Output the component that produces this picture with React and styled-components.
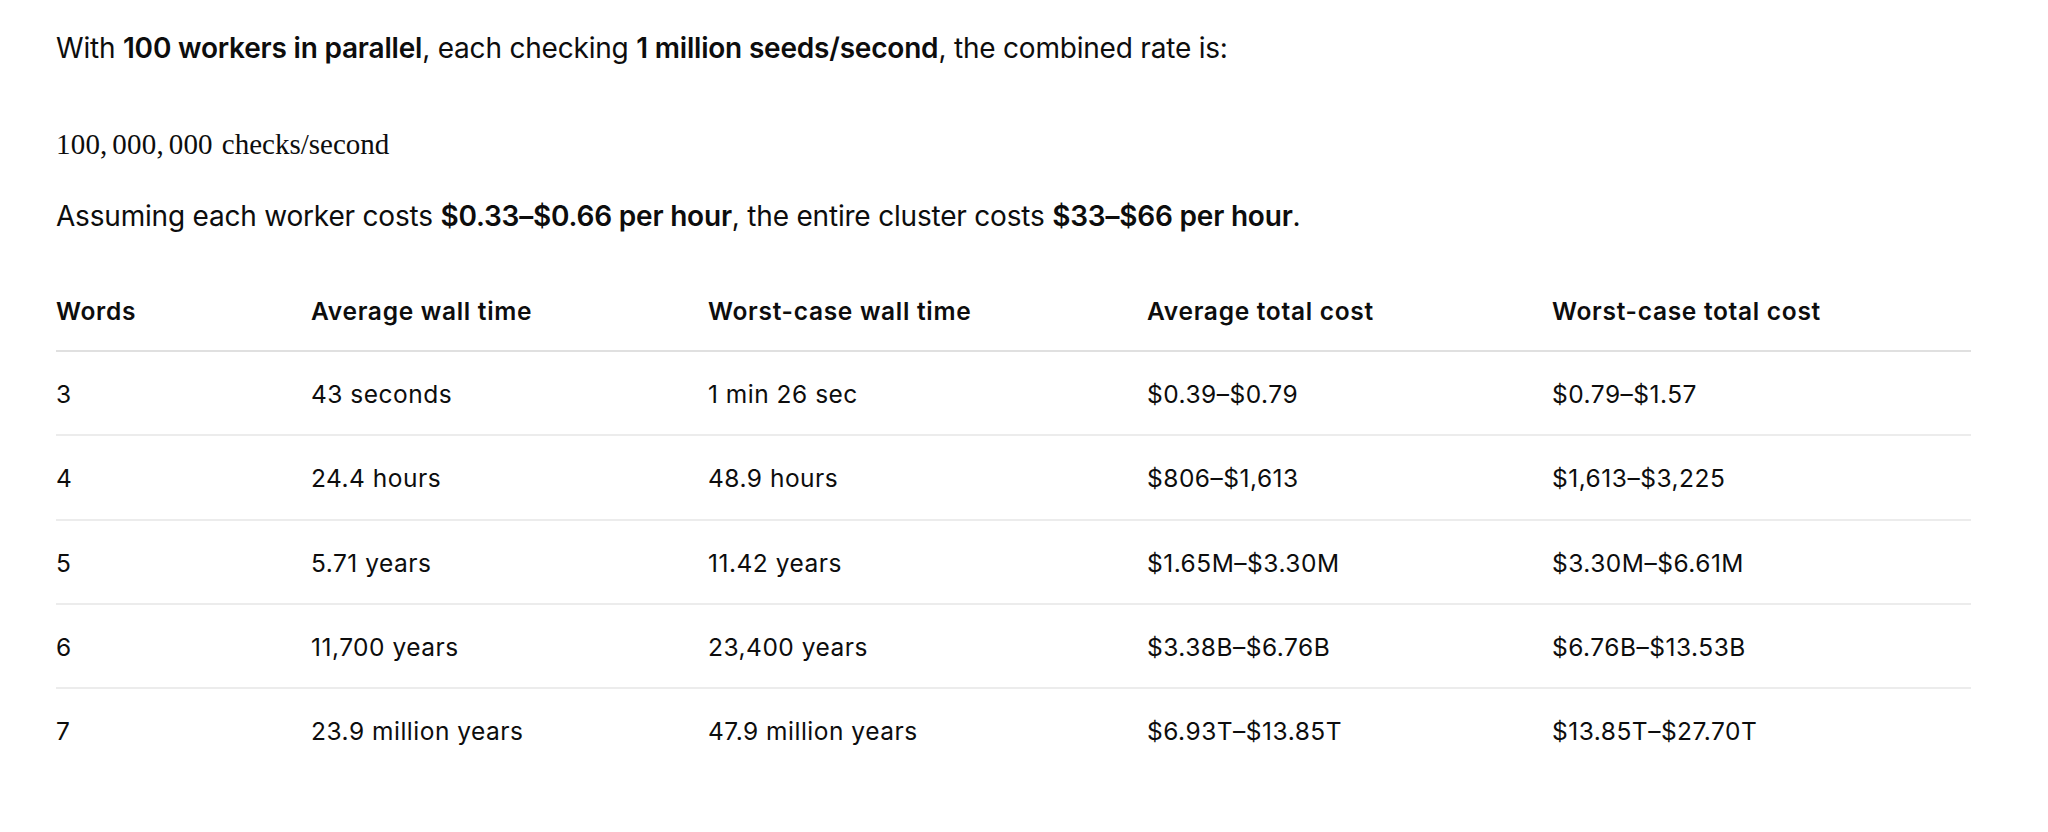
import React from "react";
import styled, { createGlobalStyle } from "styled-components";

const GlobalStyle = createGlobalStyle`
  html, body { margin: 0; padding: 0; background: #ffffff; }
  body {
    font-family: Inter, "Noto Sans", "Liberation Sans", sans-serif;
    color: #0d0d0d;
    -webkit-font-smoothing: antialiased;
  }
`;

const Page = styled.main`
  padding: 24px 77px 0 56px;
`;

const Paragraph = styled.p`
  margin: ${(p) => p.$mt || 0}px 0 0;
  font-size: 28px;
  line-height: 48px;
  font-weight: 400;
  letter-spacing: -0.2px;
`;

const Strong = styled.strong`
  font-weight: 600;
`;

const MathBlock = styled.div`
  margin-top: 52px;
  font-family: "Liberation Serif", "DejaVu Serif", serif;
  font-size: 29px;
  line-height: 40px;
  color: #0d0d0d;
`;

const MathNum = styled.span`
  letter-spacing: 0.2px;
`;

const MathComma = styled.span`
  margin-right: 5px;
`;

const MathText = styled.span`
  margin-left: 9px;
`;

const Table = styled.table`
  margin-top: 28px;
  width: 1915px;
  border-collapse: collapse;
  table-layout: fixed;
  font-size: 24.5px;
  line-height: 32px;
`;

const Col = styled.col`
  width: ${(p) => p.$w}px;
`;

const HeadCell = styled.th`
  text-align: left;
  font-weight: 600;
  letter-spacing: 0.7px;
  padding: 27px 0 23px;
  border-bottom: 2px solid #e0e0e0;
  vertical-align: top;
  white-space: nowrap;
`;

const Row = styled.tr`
  border-bottom: ${(p) => (p.$last ? "none" : "2px solid #ececec")};
`;

const Cell = styled.td`
  text-align: left;
  font-weight: 400;
  letter-spacing: 0.5px;
  padding: 26px 0 24.25px;
  vertical-align: top;
  white-space: nowrap;
`;

const cols = [255, 397, 439, 405, 419];
const headers = [
  "Words",
  "Average wall time",
  "Worst-case wall time",
  "Average total cost",
  "Worst-case total cost",
];
const rows = [
  ["3", "43 seconds", "1 min 26 sec", "$0.39–$0.79", "$0.79–$1.57"],
  ["4", "24.4 hours", "48.9 hours", "$806–$1,613", "$1,613–$3,225"],
  ["5", "5.71 years", "11.42 years", "$1.65M–$3.30M", "$3.30M–$6.61M"],
  ["6", "11,700 years", "23,400 years", "$3.38B–$6.76B", "$6.76B–$13.53B"],
  ["7", "23.9 million years", "47.9 million years", "$6.93T–$13.85T", "$13.85T–$27.70T"],
];

export default function App() {
  return (
    <>
      <GlobalStyle />
      <Page>
        <Paragraph>
          With <Strong>100 workers in parallel</Strong>, each checking{" "}
          <Strong>1 million seeds/second</Strong>, the combined rate is:
        </Paragraph>
        <MathBlock>
          <MathNum>100</MathNum>
          <MathComma>,</MathComma>
          <MathNum>000</MathNum>
          <MathComma>,</MathComma>
          <MathNum>000</MathNum>
          <MathText>checks/second</MathText>
        </MathBlock>
        <Paragraph $mt={28}>
          Assuming each worker costs <Strong>$0.33–$0.66 per hour</Strong>, the
          entire cluster costs <Strong>$33–$66 per hour</Strong>.
        </Paragraph>
        <Table>
          <colgroup>
            {cols.map((w, i) => (
              <Col key={i} $w={w} />
            ))}
          </colgroup>
          <thead>
            <tr>
              {headers.map((h) => (
                <HeadCell key={h}>{h}</HeadCell>
              ))}
            </tr>
          </thead>
          <tbody>
            {rows.map((r, i) => (
              <Row key={r[0]} $last={i === rows.length - 1}>
                {r.map((c, j) => (
                  <Cell key={j}>{c}</Cell>
                ))}
              </Row>
            ))}
          </tbody>
        </Table>
      </Page>
    </>
  );
}
